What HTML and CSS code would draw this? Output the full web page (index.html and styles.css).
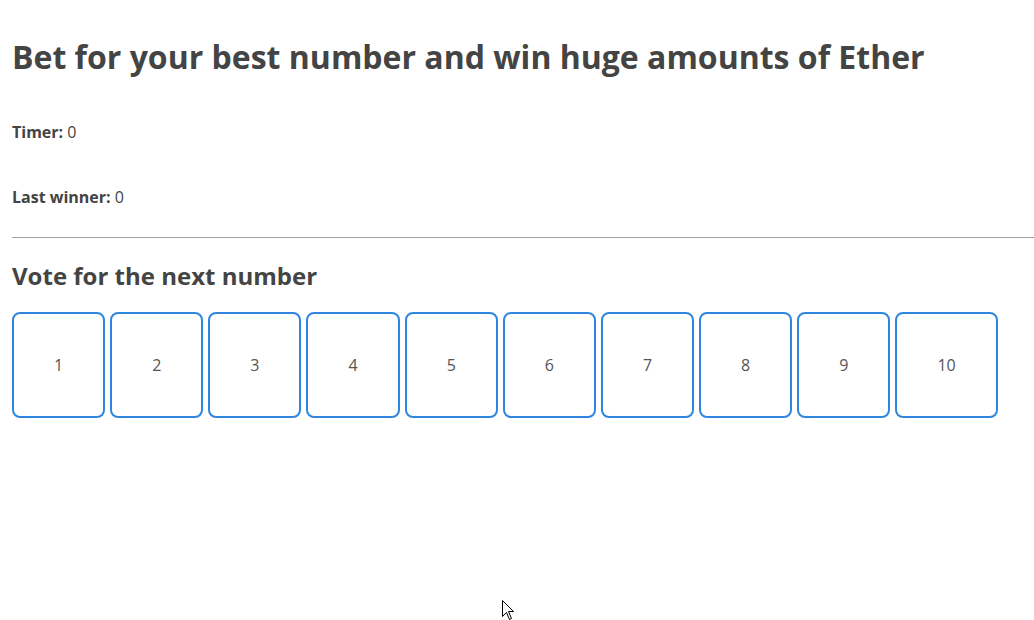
FILE: index.html
```html
<!DOCTYPE html>
<html>
<head>
<meta charset="utf-8">
<link rel="stylesheet" href="styles.css">
</head>
<body>
<div class="page">
  <h1 class="title">Bet for your best number and win huge amounts of Ether</h1>
  <p class="stat"><b>Timer:</b> 0</p>
  <p class="stat"><b>Last winner:</b> 0</p>
  <hr class="rule">
  <h2 class="subtitle">Vote for the next number</h2>
  <div class="numbers">
    <div class="num">1</div>
    <div class="num">2</div>
    <div class="num">3</div>
    <div class="num">4</div>
    <div class="num">5</div>
    <div class="num">6</div>
    <div class="num">7</div>
    <div class="num">8</div>
    <div class="num">9</div>
    <div class="num">10</div>
  </div>
</div>
<svg class="cursor" width="13" height="21" viewBox="0 0 13 21">
  <path d="M0.5 0.5 L0.5 16.5 L4.5 12.5 L7.5 19.5 L9.5 18.5 L6.5 11.5 L11.5 11.5 Z" fill="#fff" stroke="#000" stroke-width="1"/>
</svg>
</body>
</html>
```
FILE: styles.css
```css
html, body {
  margin: 0;
  padding: 0;
  background: #fff;
}
body {
  font-family: "Open Sans", "Liberation Sans", sans-serif;
  color: #444;
  font-size: 16px;
}
.page {
  padding-left: 12px;
}
.title {
  font-size: 32px;
  font-weight: 700;
  margin: 0;
  padding-top: 35px;
  line-height: 44px;
}
.stat {
  margin: 0;
  line-height: 22px;
}
.title + .stat {
  margin-top: 42px;
}
.stat + .stat {
  margin-top: 43px;
}
.stat b {
  font-weight: 700;
}
.rule {
  border: 0;
  border-top: 1px solid #a0a0a0;
  margin: 29px 0 0 0;
}
.subtitle {
  font-size: 24px;
  font-weight: 700;
  margin: 22px 0 0 0;
  line-height: 32px;
}
.numbers {
  display: flex;
  gap: 5px;
  margin-top: 20px;
}
.num {
  border: 2px solid #2e86de;
  border-radius: 8px;
  padding: 40px 40px;
  line-height: 22px;
  font-size: 16px;
  color: #555;
}
.cursor {
  position: absolute;
  left: 502px;
  top: 600px;
}
```
